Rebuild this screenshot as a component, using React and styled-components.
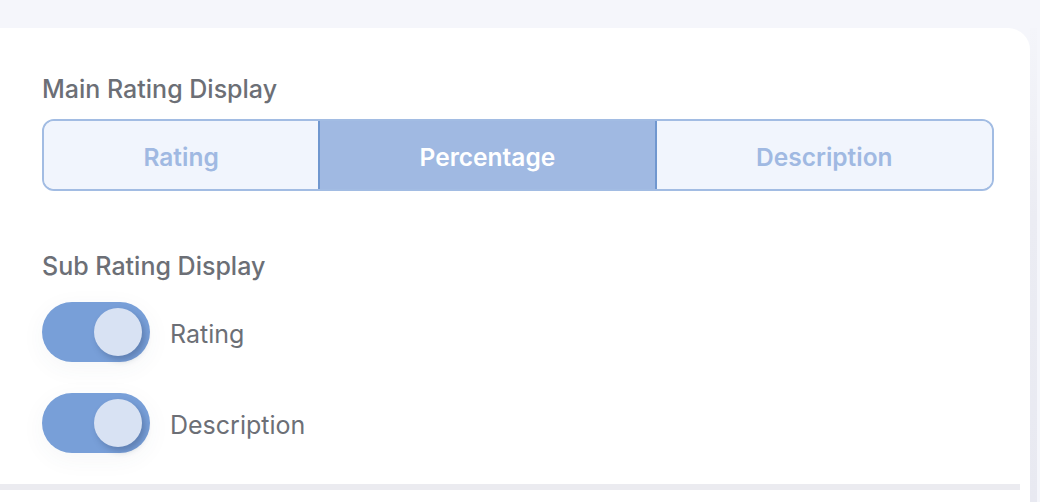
import React, { useState } from "react";
import styled, { createGlobalStyle } from "styled-components";

const GlobalStyle = createGlobalStyle`
  html, body {
    margin: 0;
    padding: 0;
    background: #f5f6fb;
    overflow: hidden;
  }
  body {
    font-family: Inter, "Open Sans", sans-serif;
  }
`;

const Page = styled.div`
  height: 502px;
  padding-top: 28px;
  box-sizing: border-box;
  display: flex;
`;

const Card = styled.div`
  flex: 1;
  background: #ffffff;
  border-top-right-radius: 22px;
  padding: 46px 36px 0 42px;
  display: flex;
  flex-direction: column;
`;

const Rail = styled.div`
  width: 7px;
  margin-right: 3px;
  background: linear-gradient(to bottom, #f4f5fa 0%, #ebecf3 40%, #e8e9f1 100%);
`;

const Label = styled.div`
  font-size: 25px;
  font-weight: 500;
  color: #6c6f76;
  line-height: 30px;
  margin-bottom: ${(p) => p.gap}px;
`;

const Segmented = styled.div`
  display: flex;
  flex-shrink: 0;
  height: 72px;
  border: 2px solid #a2bce3;
  border-radius: 12px;
  overflow: hidden;
  box-sizing: border-box;
  margin-bottom: 60px;
`;

const Segment = styled.button`
  flex: 1 1 auto;
  border: none;
  margin: 0;
  padding: 3px 0 0;
  font-family: inherit;
  font-size: 24.5px;
  font-weight: 600;
  cursor: pointer;
  background: ${(p) => (p.active ? "#a0b9e2" : "#f1f5fd")};
  color: ${(p) => (p.active ? "#ffffff" : "#a0b9e2")};
  border-left: ${(p) => (p.active ? "2px solid #7097cf" : "none")};
  border-right: ${(p) => (p.active ? "2px solid #7097cf" : "none")};
`;

const ToggleRow = styled.div`
  display: flex;
  align-items: center;
  gap: 20px;
  margin-bottom: 31px;

  &:last-of-type {
    margin-bottom: 29px;
  }
`;

const Track = styled.button`
  position: relative;
  flex-shrink: 0;
  width: 108px;
  height: 60px;
  border: none;
  padding: 0;
  border-radius: 30px;
  background: ${(p) => (p.on ? "#789fd8" : "#c9d3e4")};
  box-shadow: 0 6px 24px rgba(60, 70, 100, 0.05);
  cursor: pointer;
`;

const Knob = styled.span`
  position: absolute;
  top: 6px;
  left: ${(p) => (p.on ? "52px" : "8px")};
  width: 48px;
  height: 48px;
  border-radius: 50%;
  background: #d8e2f3;
  box-shadow: 3px 4px 6px rgba(50, 70, 110, 0.35);
`;

const ToggleText = styled.span`
  font-size: 25px;
  color: #6c6f76;
  padding-top: 3px;
`;

const Divider = styled.div`
  height: 6px;
  flex-shrink: 0;
  background: #ebebf0;
  margin: 0 -26px 0 -42px;
`;

const Toggle = ({ label }) => {
  const [on, setOn] = useState(true);
  return (
    <ToggleRow>
      <Track on={on ? 1 : 0} onClick={() => setOn(!on)}>
        <Knob on={on ? 1 : 0} />
      </Track>
      <ToggleText>{label}</ToggleText>
    </ToggleRow>
  );
};

const App = () => {
  const [mode, setMode] = useState("Percentage");
  return (
    <Page>
      <GlobalStyle />
      <Card>
        <Label gap={15}>Main Rating Display</Label>
        <Segmented>
          {["Rating", "Percentage", "Description"].map((m) => (
            <Segment key={m} active={mode === m ? 1 : 0} onClick={() => setMode(m)}>
              {m}
            </Segment>
          ))}
        </Segmented>
        <Label gap={21}>Sub Rating Display</Label>
        <Toggle label="Rating" />
        <Toggle label="Description" />
        <Divider />
      </Card>
      <Rail />
    </Page>
  );
};

export default App;
